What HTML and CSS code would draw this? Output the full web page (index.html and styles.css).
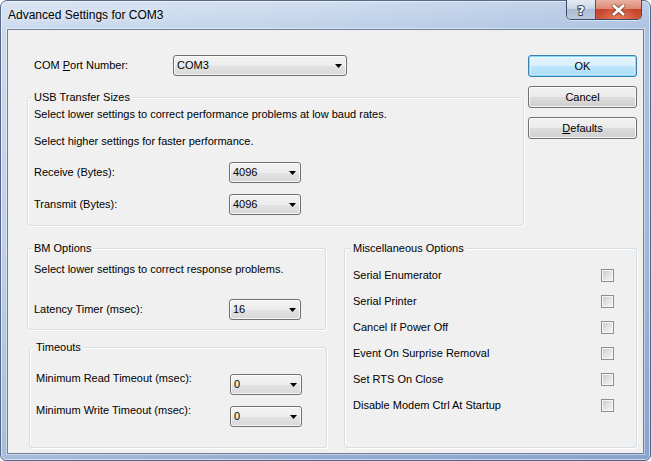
FILE: index.html
```html
<!DOCTYPE html>
<html>
<head>
<meta charset="utf-8">
<title>Advanced Settings for COM3</title>
<link rel="stylesheet" href="styles.css">
</head>
<body>
<div class="window">
  <div class="titlebar">
    <div class="title">Advanced Settings for COM3</div>
    <div class="caption-btns">
      <div class="cap help">
        <svg width="14" height="14" viewBox="0 0 14 14"><text x="7" y="12" text-anchor="middle" class="help-glyph">?</text></svg>
      </div>
      <div class="cap close">
        <svg width="15" height="12" viewBox="0 0 15 12">
          <path d="M3 2 L12 10 M12 2 L3 10" stroke="#4a1a12" stroke-width="4.6" stroke-linecap="round" opacity="0.55" fill="none"/>
          <path d="M3 2 L12 10 M12 2 L3 10" stroke="#ffffff" stroke-width="2.8" stroke-linecap="square" fill="none"/>
        </svg>
      </div>
    </div>
  </div>
  <div class="client">
    <div class="top">
      <div class="top-left">
        <div class="com-row">
          <span class="com-label">COM <u>P</u>ort Number:</span>
          <div class="combo combo-wide"><span>COM3</span><svg class="arrow" width="7" height="4" viewBox="0 0 7 4"><polygon points="0,0 7,0 3.5,4" fill="#000"/></svg></div>
        </div>
        <div class="group usb">
          <div class="group-title">USB Transfer Sizes</div>
          <p class="line usb-l1">Select lower settings to correct performance problems at low baud rates.</p>
          <p class="line usb-l2">Select higher settings for faster performance.</p>
          <div class="row usb-r1">
            <span class="lbl">Receive (Bytes):</span>
            <div class="combo"><span>4096</span><svg class="arrow" width="7" height="4" viewBox="0 0 7 4"><polygon points="0,0 7,0 3.5,4" fill="#000"/></svg></div>
          </div>
          <div class="row usb-r2">
            <span class="lbl">Transmit (Bytes):</span>
            <div class="combo"><span>4096</span><svg class="arrow" width="7" height="4" viewBox="0 0 7 4"><polygon points="0,0 7,0 3.5,4" fill="#000"/></svg></div>
          </div>
        </div>
      </div>
      <div class="buttons">
        <div class="btn btn-default">OK</div>
        <div class="btn">Cancel</div>
        <div class="btn"><u>D</u>efaults</div>
      </div>
    </div>
    <div class="bottom">
      <div class="col-left">
        <div class="group bm">
          <div class="group-title">BM Options</div>
          <p class="line bm-l1">Select lower settings to correct response problems.</p>
          <div class="row bm-r1">
            <span class="lbl">Latency Timer (msec):</span>
            <div class="combo"><span>16</span><svg class="arrow" width="7" height="4" viewBox="0 0 7 4"><polygon points="0,0 7,0 3.5,4" fill="#000"/></svg></div>
          </div>
        </div>
        <div class="group timeouts">
          <div class="group-title">Timeouts</div>
          <div class="trow to-r1">
            <span class="lbl lbl-t">Minimum Read Timeout (msec):</span>
            <div class="combo"><span>0</span><svg class="arrow" width="7" height="4" viewBox="0 0 7 4"><polygon points="0,0 7,0 3.5,4" fill="#000"/></svg></div>
          </div>
          <div class="trow to-r2">
            <span class="lbl lbl-t">Minimum Write Timeout (msec):</span>
            <div class="combo"><span>0</span><svg class="arrow" width="7" height="4" viewBox="0 0 7 4"><polygon points="0,0 7,0 3.5,4" fill="#000"/></svg></div>
          </div>
        </div>
      </div>
      <div class="group misc">
        <div class="group-title">Miscellaneous Options</div>
        <div class="checks">
          <div class="check-row"><span class="check-label">Serial Enumerator</span><span class="checkbox"><span class="check-inner"></span></span></div>
          <div class="check-row"><span class="check-label">Serial Printer</span><span class="checkbox"><span class="check-inner"></span></span></div>
          <div class="check-row"><span class="check-label">Cancel If Power Off</span><span class="checkbox"><span class="check-inner"></span></span></div>
          <div class="check-row"><span class="check-label">Event On Surprise Removal</span><span class="checkbox"><span class="check-inner"></span></span></div>
          <div class="check-row"><span class="check-label">Set RTS On Close</span><span class="checkbox"><span class="check-inner"></span></span></div>
          <div class="check-row"><span class="check-label">Disable Modem Ctrl At Startup</span><span class="checkbox"><span class="check-inner"></span></span></div>
        </div>
      </div>
    </div>
  </div>
</div>
</body>
</html>
```

FILE: styles.css
```css
* { box-sizing: border-box; }
html, body { margin: 0; padding: 0; background: #ffffff; }
body {
  width: 651px;
  height: 461px;
  overflow: hidden;
  font-family: "Liberation Sans", Arial, sans-serif;
  font-size: 11px;
  line-height: 13px;
  color: #000;
}
u { text-decoration: underline; text-underline-offset: 1px; }

.window {
  width: 651px;
  height: 461px;
  display: flex;
  flex-direction: column;
  padding: 0 6px 6px 6px;
  border: 1px solid #56698a;
  border-radius: 7px 7px 6px 6px;
  background:
    linear-gradient(90deg, rgba(255,255,255,0.18) 0%, rgba(255,255,255,0) 45%, rgba(60,100,170,0.14) 100%),
    linear-gradient(180deg, #d2dff0 0px, #c0d3ea 28px, #b1c5e1 55%, #95add2 100%);
  box-shadow: inset 0 0 0 1px rgba(255,255,255,0.55);
}

.titlebar {
  height: 28px;
  flex: none;
  display: flex;
  align-items: flex-start;
}
.title {
  margin: 6px 0 0 1px;
  font-size: 12px;
  line-height: 16px;
  color: #000;
  text-shadow: 0 0 6px rgba(255,255,255,0.9);
}
.caption-btns {
  margin: -1px 2px 0 auto;
  display: flex;
  height: 20px;
  border: 1px solid #3d4c66;
  border-top: none;
  border-radius: 0 0 5px 5px;
  overflow: hidden;
  box-shadow: 0 1px 0 rgba(255,255,255,0.5);
}
.cap {
  height: 19px;
  display: flex;
  align-items: center;
  justify-content: center;
}
.help {
  width: 29px;
  border-right: 1px solid #4a566e;
  background: linear-gradient(180deg, #e3eaf3 0%, #cbd6e4 45%, #aebdd3 50%, #b9c8dc 100%);
}
.help-glyph {
  font-family: "DejaVu Sans", sans-serif;
  font-weight: bold;
  font-size: 12px;
  fill: #ffffff;
  stroke: #3a465c;
  stroke-width: 2px;
  paint-order: stroke;
}
.close {
  width: 45px;
  background:
    radial-gradient(ellipse at 50% 100%, rgba(255,160,120,0.55) 0%, rgba(255,160,120,0) 60%),
    linear-gradient(180deg, #eab2a3 0%, #dc8a74 45%, #c5432b 50%, #cf553b 100%);
}

.client {
  flex: 1;
  border: 1px solid #6f7f99;
  background: #f0f0f0;
  box-shadow: 0 0 0 1px rgba(255,255,255,0.45);
  padding: 25px 6px 0 19px;
  display: flex;
  flex-direction: column;
}

.top { display: flex; gap: 4px; align-items: flex-start; }
.top-left { width: 497px; }
.com-row { display: flex; align-items: center; height: 21px; padding-left: 7px; }
.com-label { width: 139px; }

.combo {
  width: 72px;
  height: 21px;
  border: 1px solid #707070;
  border-radius: 3px;
  background: linear-gradient(180deg, #f3f3f3 0%, #ececec 50%, #e2e2e2 51%, #d9d9d9 100%);
  box-shadow: inset 0 0 0 1px rgba(255,255,255,0.75);
  display: flex;
  align-items: center;
  justify-content: space-between;
  padding: 0 4px 0 3px;
  flex: none;
}
.combo-wide { width: 174px; }
.arrow { display: block; }

.group {
  border: 1px solid #d5dfe5;
  border-radius: 3px;
  box-shadow: inset 1px 1px 0 #fff, 1px 1px 0 #fff;
  padding-left: 6px;
}
.group-title {
  display: table;
  margin: -7px 0 0 -2px;
  padding: 0 2px;
  background: #f0f0f0;
  line-height: 13px;
}
.line { margin: 0; line-height: 13px; }
.row { display: flex; align-items: center; height: 21px; }
.lbl { width: 195px; flex: none; }

.usb { margin-top: 21px; padding-bottom: 10px; }
.usb-l1 { margin-top: 4px; }
.usb-l2 { margin-top: 14px; }
.usb-r1 { margin-top: 14px; }
.usb-r2 { margin-top: 11px; }

.buttons { width: 109px; display: flex; flex-direction: column; gap: 9px; }
.btn {
  height: 22px;
  border: 1px solid #707070;
  border-radius: 3px;
  background: linear-gradient(180deg, #f2f2f2 0%, #ebebeb 50%, #dddddd 51%, #cfcfcf 100%);
  box-shadow: inset 0 0 0 1px rgba(255,255,255,0.8);
  display: flex;
  align-items: center;
  justify-content: center;
}
.btn-default {
  border-color: #3c7fb1;
  background: linear-gradient(180deg, #e6f5fd 0%, #d6effc 50%, #bde6fb 51%, #a9dcf6 100%);
  box-shadow: inset 0 0 0 1px #7fdcfb, inset 0 0 0 2px rgba(255,255,255,0.35);
}

.bottom { display: flex; gap: 18px; margin-top: 22px; align-items: stretch; }
.col-left { width: 299px; display: flex; flex-direction: column; }

.bm { padding-bottom: 9px; }
.bm-l1 { margin-top: 8px; }
.bm-r1 { margin-top: 23px; }

.timeouts { margin: 17px 0 0 2px; width: 298px; padding-bottom: 20px; }
.trow { display: flex; align-items: flex-start; }
.lbl-t { width: 194px; }
.trow .combo { margin-top: 2px; }
.to-r1 { margin-top: 18px; }
.to-r2 { margin-top: 9px; }

.misc { width: 295px; padding: 0 22px 0 8px; }
.checks { margin-top: 14px; display: flex; flex-direction: column; gap: 13px; }
.check-row { display: flex; align-items: center; height: 13px; }
.check-label { flex: 1; }
.checkbox {
  width: 13px;
  height: 13px;
  border: 1px solid #8e8f8f;
  background: #f7f7f7;
  padding: 1px;
  flex: none;
}
.check-inner {
  display: block;
  width: 9px;
  height: 9px;
  background: linear-gradient(135deg, #c9ccd1 0%, #dfe1e3 45%, #f3f3f3 100%);
}
```
